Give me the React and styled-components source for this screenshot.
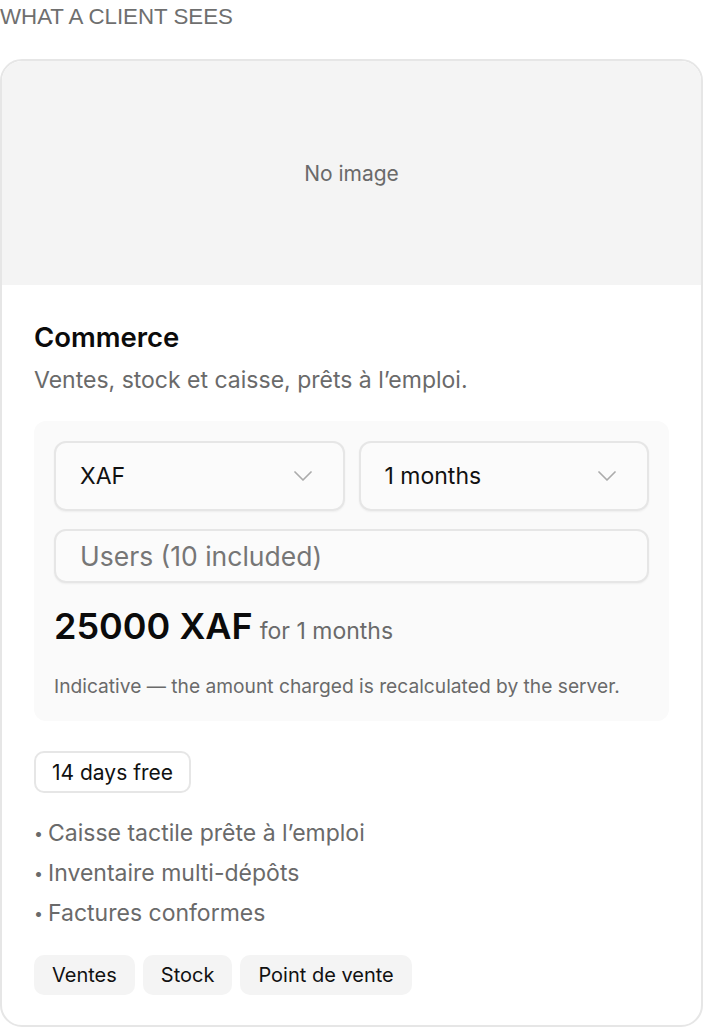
import React from 'react';
import styled, { createGlobalStyle } from 'styled-components';

const GlobalStyle = createGlobalStyle`
    * { box-sizing: border-box; }
    body {
        margin: 0;
        background: #fff;
        font-family: Inter, "Noto Sans", sans-serif;
        color: #111;
    }
`;

const Page = styled.div`
    width: 704px;
    padding-top: 3px;
`;

const Label = styled.div`
    font-family: "Liberation Sans", Arial, sans-serif;
    font-size: 22.3px;
    text-transform: uppercase;
    color: #6f6f6f;
    line-height: 27px;
    margin-bottom: 29px;
`;

const Card = styled.div`
    margin-right: 1px;
    border: 2px solid #e6e6e6;
    border-radius: 22px;
    overflow: hidden;
    background: #fff;
`;

const ImageSlot = styled.div`
    height: 224px;
    background: #f4f4f4;
    display: flex;
    align-items: center;
    justify-content: center;
    font-size: 21px;
    color: #6a6a6a;
`;

const Body = styled.div`
    padding: 35px 32px 30px;
`;

const Title = styled.h2`
    margin: 0;
    font-size: 27.5px;
    font-weight: 600;
    line-height: 34px;
    color: #0b0b0b;
`;

const Lead = styled.p`
    margin: 11px 0 26px;
    font-size: 23px;
    line-height: 30px;
    color: #6a6a6a;
`;

const PriceBox = styled.div`
    background: #fafafa;
    border-radius: 12px;
    padding: 20px 20px 22px;
`;

const Row = styled.div`
    display: grid;
    grid-template-columns: 1fr 1fr;
    gap: 14px;
`;

const Select = styled.div`
    height: 70px;
    border: 2px solid #e6e6e6;
    border-radius: 12px;
    background: #fbfbfb;
    box-shadow: 0 1px 2px rgba(0, 0, 0, 0.05);
    display: flex;
    align-items: center;
    justify-content: space-between;
    padding: 0 31px 0 24px;
    font-size: 23px;
    color: #111;
    svg { color: #ababab; }
`;

const Input = styled.div`
    margin-top: 18px;
    height: 54px;
    border: 2px solid #e6e6e6;
    border-radius: 12px;
    background: #fbfbfb;
    box-shadow: 0 1px 2px rgba(0, 0, 0, 0.05);
    display: flex;
    align-items: center;
    padding: 0 24px;
    font-size: 26.5px;
    color: #767676;
`;

const Price = styled.div`
    margin-top: 21px;
    display: flex;
    align-items: baseline;
    gap: 7px;
    line-height: 44px;
`;

const Amount = styled.span`
    font-size: 36px;
    font-weight: 600;
    color: #0b0b0b;
`;

const Period = styled.span`
    font-size: 23px;
    color: #6a6a6a;
`;

const Note = styled.div`
    margin-top: 20px;
    font-size: 19.2px;
    line-height: 26px;
    color: #6a6a6a;
`;

const Badge = styled.div`
    display: flex;
    align-items: center;
    width: fit-content;
    height: 42px;
    margin-top: 30px;
    padding: 0 16px;
    border: 2px solid #e6e6e6;
    border-radius: 10px;
    font-size: 21px;
    color: #111;
`;

const Features = styled.ul`
    list-style: none;
    margin: 20px 0 0;
    padding: 0;
`;

const Feature = styled.li`
    font-size: 23px;
    line-height: 40px;
    color: #6a6a6a;
`;

const Dot = styled.span`
    display: inline-block;
    width: 14px;
    font-size: 16px;
    vertical-align: 2px;
`;

const Tags = styled.div`
    display: flex;
    gap: 8px;
    margin-top: 22px;
`;

const Tag = styled.span`
    height: 40px;
    padding: 0 18px;
    display: inline-flex;
    align-items: center;
    border-radius: 10px;
    background: #f4f4f4;
    font-size: 20px;
    color: #111;
`;

const Chevron = () => (
    <svg width="18" height="10" viewBox="0 0 18 10" fill="none" stroke="currentColor" strokeWidth="1.7" strokeLinecap="round" strokeLinejoin="round">
        <path d="M1 1l8 8 8-8" />
    </svg>
);

const features = ['Caisse tactile prête à l’emploi', 'Inventaire multi-dépôts', 'Factures conformes'];
const tags = ['Ventes', 'Stock', 'Point de vente'];

export default function App() {
    return (
        <Page>
            <GlobalStyle />
            <Label>What a client sees</Label>
            <Card>
                <ImageSlot>No image</ImageSlot>
                <Body>
                    <Title>Commerce</Title>
                    <Lead>Ventes, stock et caisse, prêts à l’emploi.</Lead>
                    <PriceBox>
                        <Row>
                            <Select>XAF <Chevron /></Select>
                            <Select>1 months <Chevron /></Select>
                        </Row>
                        <Input>Users (10 included)</Input>
                        <Price>
                            <Amount>25000 XAF</Amount>
                            <Period>for 1 months</Period>
                        </Price>
                        <Note>Indicative — the amount charged is recalculated by the server.</Note>
                    </PriceBox>
                    <Badge>14 days free</Badge>
                    <Features>
                        {features.map(f => <Feature key={f}><Dot>•</Dot>{f}</Feature>)}
                    </Features>
                    <Tags>
                        {tags.map(t => <Tag key={t}>{t}</Tag>)}
                    </Tags>
                </Body>
            </Card>
        </Page>
    );
}
